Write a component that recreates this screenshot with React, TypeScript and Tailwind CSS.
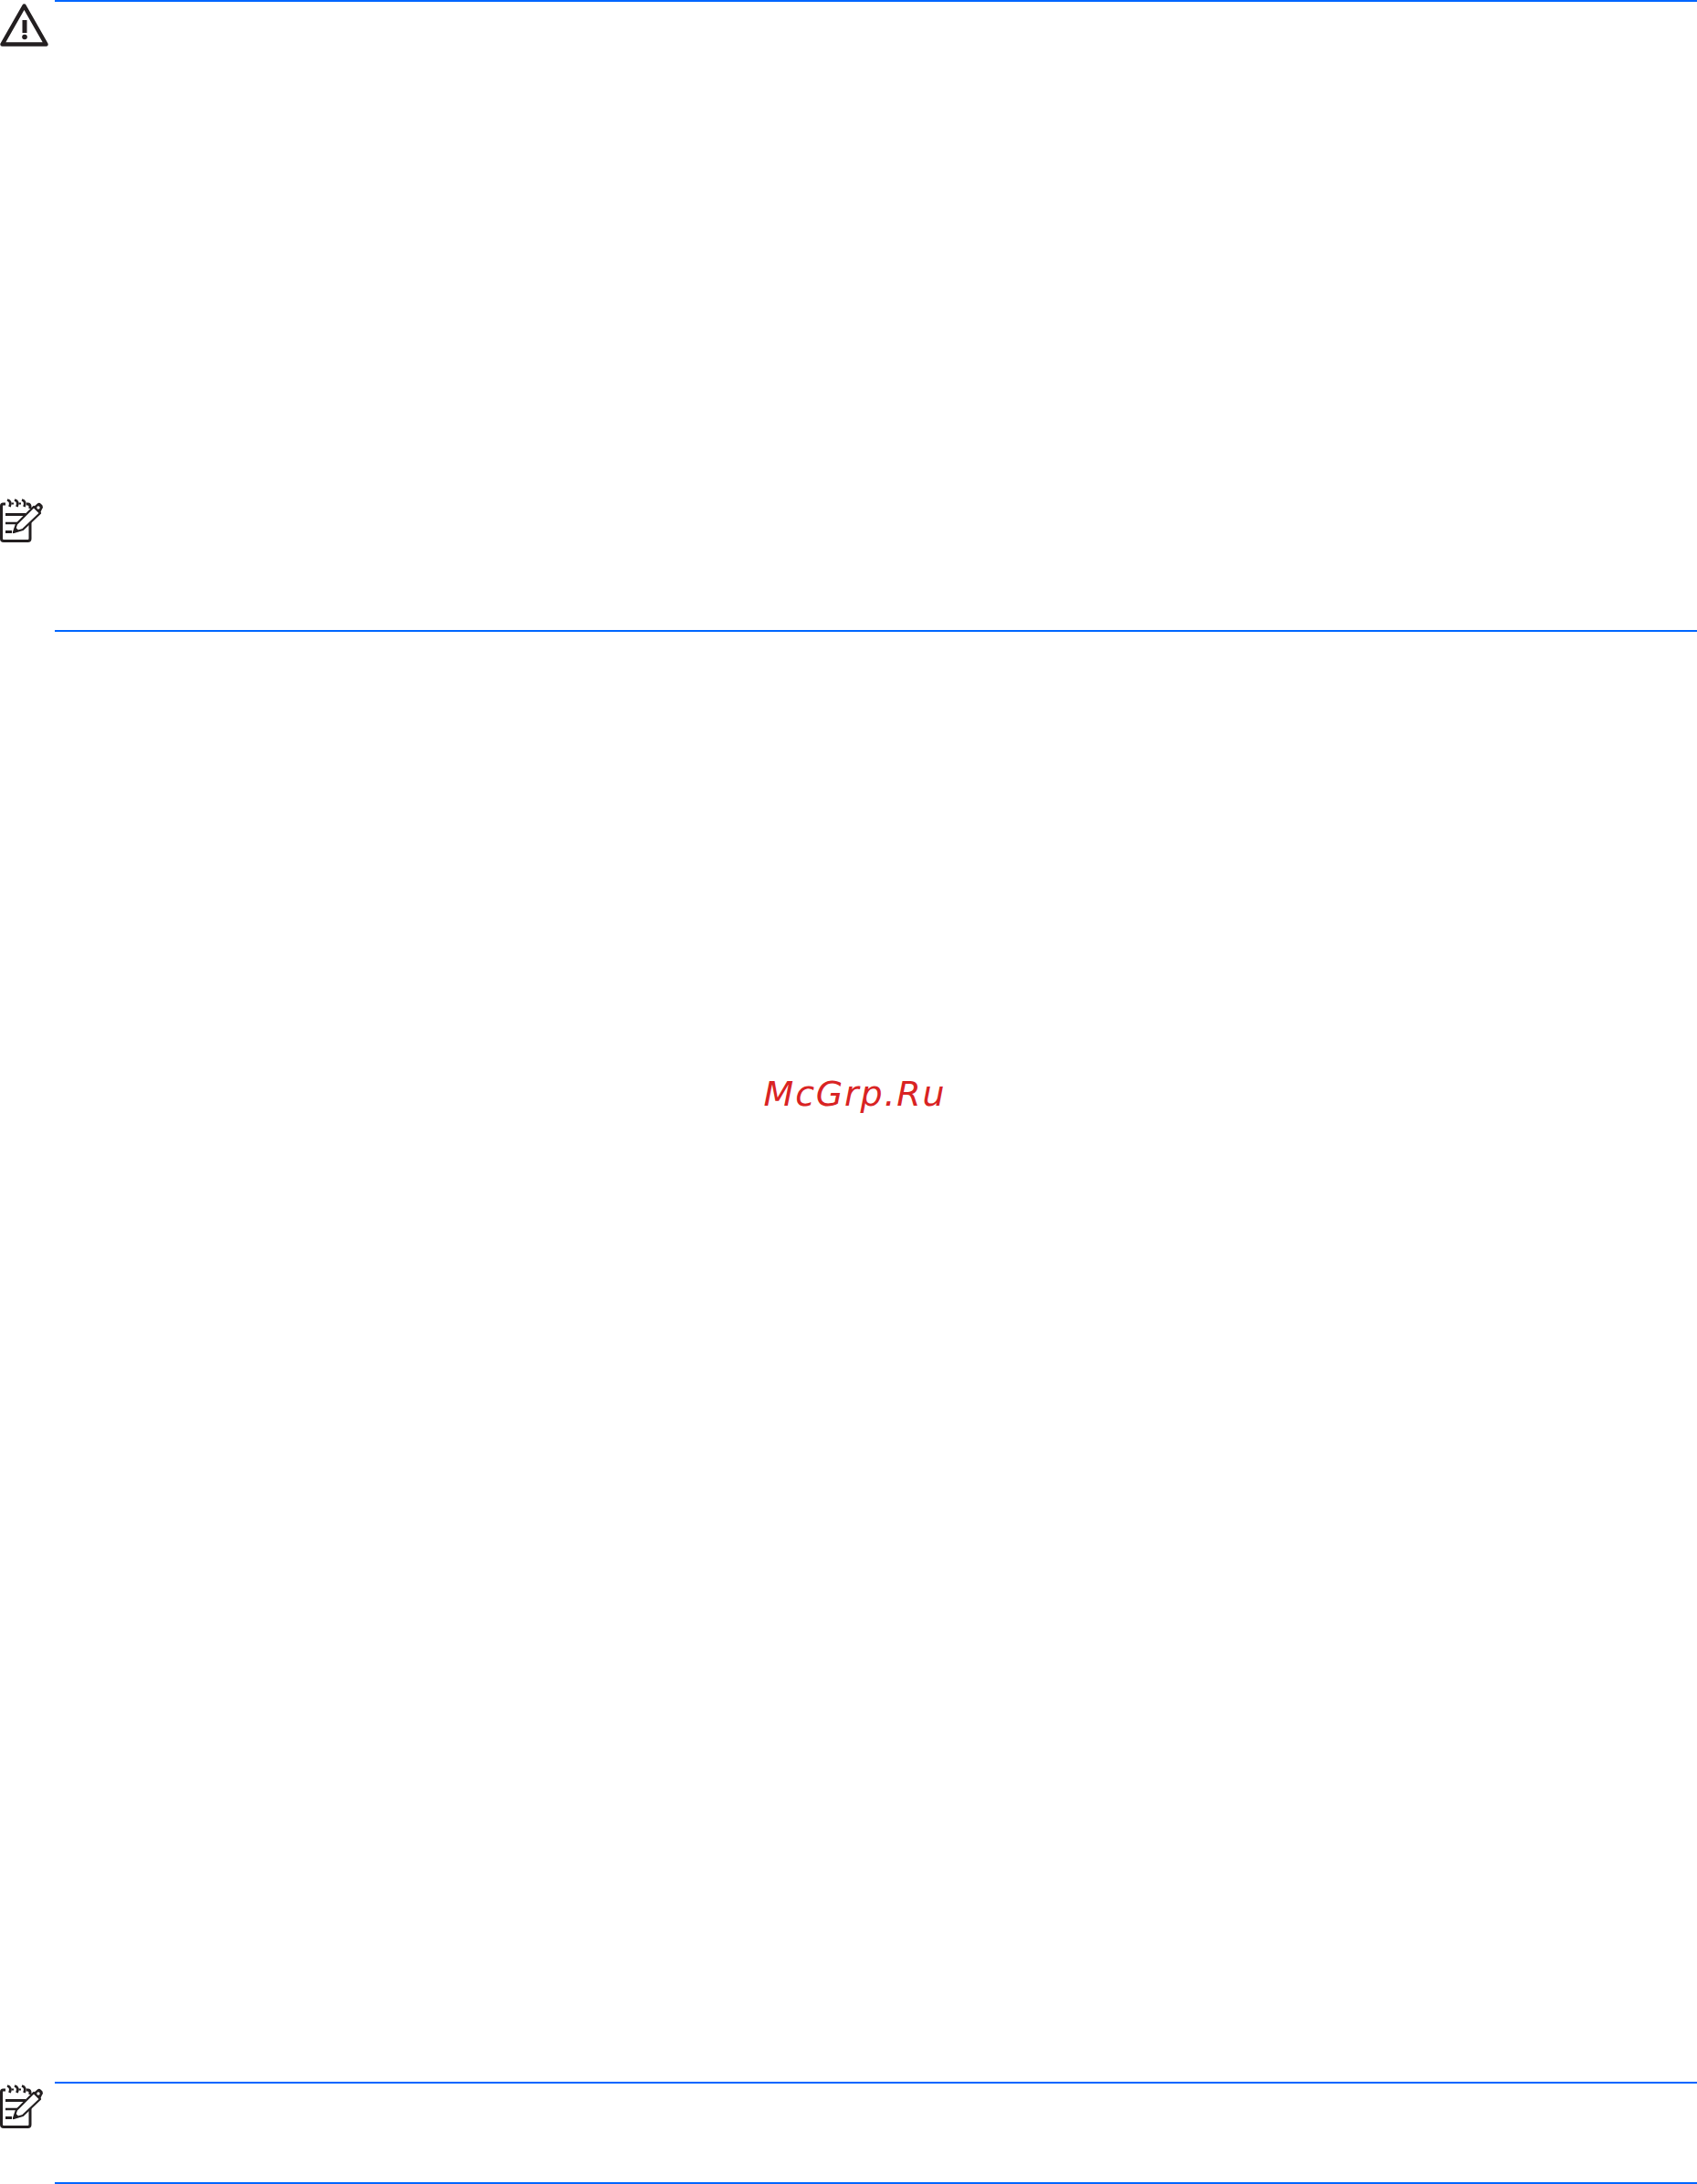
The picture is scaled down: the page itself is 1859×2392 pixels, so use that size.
import React from 'react';

const WarningIcon = () => (
  <svg width="54" height="48" viewBox="0 0 54 48" fill="none" className="block">
    <path d="M26.5 3.500 L50.500 45.500 L2.500 45.500 Z" stroke="#231f20" strokeWidth="4.500" strokeLinejoin="round" />
    <rect x="24.500" y="19" width="5" height="14" fill="#231f20" />
    <circle cx="27" cy="37.500" r="2.800" fill="#231f20" />
  </svg>
);

const NoteIcon = () => (
  <svg width="48" height="48" viewBox="0 0 48 48" fill="none" className="block">
    {/* notepad outline */}
    <path d="M6 6 H3.500 Q1.500 6 1.500 8 V44 Q1.500 46.500 4 46.500 H30.500 Q33 46.500 33 44 V24" stroke="#231f20" strokeWidth="3" />
    <path d="M29 6 H30.500 Q33 6 33 9 V11" stroke="#231f20" strokeWidth="3" />
    {/* spiral rings */}
    <path d="M8 1.500 Q13 3 10.500 9 M16 1.500 Q21 3 18.500 9 M24 1.500 Q29 3 26.500 9" stroke="#231f20" strokeWidth="2.800" />
    <path d="M12.500 5.500 H15 M20.500 5.500 H23" stroke="#231f20" strokeWidth="2" />
    {/* text lines */}
    <path d="M6 17.500 H28" stroke="#231f20" strokeWidth="3" />
    <path d="M6 27 H21" stroke="#231f20" strokeWidth="2.500" />
    <path d="M6 36.500 H13" stroke="#231f20" strokeWidth="3" />
    {/* pencil */}
    <path d="M15 37 L18 28 L37 9 L44 16 L25 34 Z" fill="#fff" stroke="#231f20" strokeWidth="2.300" strokeLinejoin="round" />
    <path d="M14 38 L16.500 31 L21 35.500 Z" fill="#231f20" />
    <path d="M37 9 L41 5.500 Q43 4 45 6 L46.500 7.500 Q47.500 9.500 46 11.500 L44 16 Z" fill="#231f20" />
    <circle cx="42" cy="10" r="1.700" fill="#fff" />
  </svg>
);

const App = () => {
  return (
    <div className="h-[2392px] w-full bg-white flex flex-col font-['DejaVu_Sans',sans-serif]">
      {/* Top block */}
      <section className="flex h-[692px] shrink-0">
        <div className="w-[60px] shrink-0 flex flex-col pt-[3px]">
          <WarningIcon />
          <div className="mt-[495px]">
            <NoteIcon />
          </div>
        </div>
        <div className="flex-1 border-t-2 border-b-2 border-[#0066ff]" />
      </section>

      {/* Watermark */}
      <main className="flex-1 flex justify-center pt-[484px] pl-[14px]">
        <span className="text-[38px] leading-[44px] italic tracking-[1.8px] text-[#d92323]">McGrp.Ru</span>
      </main>

      {/* Bottom block */}
      <section className="flex h-[112px] shrink-0">
        <div className="w-[60px] shrink-0 pt-[3px]">
          <NoteIcon />
        </div>
        <div className="flex-1 border-t-2 border-b-2 border-[#0066ff]" />
      </section>
    </div>
  );
};

export default App;
